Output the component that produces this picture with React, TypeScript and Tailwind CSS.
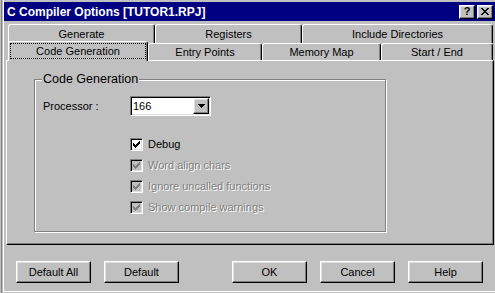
import React from "react";

const raised =
  "bg-[#c0c0c0] border border-t-white border-l-white border-r-black border-b-black shadow-[inset_-1px_-1px_#808080,inset_1px_1px_#dfdfdf]";
const sunken =
  "border border-t-[#808080] border-l-[#808080] border-r-white border-b-white shadow-[inset_1px_1px_#000,inset_-1px_-1px_#dfdfdf]";
const grayText = "text-[#808080] [text-shadow:1px_1px_0_#fff]";

const backRow = [
  { label: "Generate", w: "w-[147px]" },
  { label: "Registers", w: "w-[147px]" },
  { label: "Include Directories", w: "w-[191px]" },
];

const frontRow = [
  { label: "Entry Points", w: "w-[114px]" },
  { label: "Memory Map", w: "w-[119px]" },
  { label: "Start / End", w: "w-[112px]" },
];

const options = [
  { label: "Debug", enabled: true },
  { label: "Word align chars", enabled: false },
  { label: "Ignore uncalled functions", enabled: false },
  { label: "Show compile warnings", enabled: false },
];

const tabBase =
  "border-t border-l border-r border-t-white border-l-white border-r-black rounded-t-[3px] shadow-[inset_-1px_0_#808080] bg-[#c0c0c0] flex items-center justify-center text-[11px] text-black";

function Check({ color }: { color: string }) {
  const cols = [2, 3, 4, 3, 2, 1, 0];
  return (
    <svg width="7" height="7" viewBox="0 0 7 7" shapeRendering="crispEdges">
      {cols.map((y, x) => (
        <rect key={x} x={x} y={y} width="1" height="3" fill={color} />
      ))}
    </svg>
  );
}

function CloseGlyph() {
  const rows = [
    [0, 1, 6, 7],
    [1, 2, 5, 6],
    [2, 3, 4, 5],
    [3, 4],
    [2, 3, 4, 5],
    [1, 2, 5, 6],
    [0, 1, 6, 7],
  ];
  return (
    <svg width="8" height="7" viewBox="0 0 8 7" shapeRendering="crispEdges">
      {rows.map((r, y) =>
        r.map((x) => <rect key={`${x}-${y}`} x={x} y={y} width="1" height="1" fill="#000" />)
      )}
    </svg>
  );
}

function Button({ label, className = "" }: { label: string; className?: string }) {
  return (
    <div className={`${raised} w-[75px] h-[22px] flex items-center justify-center text-[11px] text-black ${className}`}>
      {label}
    </div>
  );
}

export default function App() {
  return (
    <div className="w-[495px] h-[293px] bg-[#c0c0c0] pl-[1px] overflow-hidden font-['Liberation_Sans',Arial,sans-serif] select-none">
      <div className="h-full border-l border-[#808080]">
        <div className="ml-[1px] h-[292px] border-l border-b border-white pt-[2px] flex flex-col">
          {/* title bar */}
          <div className="h-[19px] bg-[#000080] flex items-center justify-between pl-[3px] pr-[2px]">
            <span className="text-white font-bold text-[12px] leading-none">C Compiler Options [TUTOR1.RPJ]</span>
            <div className="flex gap-[2px]">
              <div className={`${raised} w-[16px] h-[14px] flex items-center justify-center text-[11px] font-bold leading-none text-black`}>
                ?
              </div>
              <div className={`${raised} w-[16px] h-[14px] flex items-center justify-center`}>
                <CloseGlyph />
              </div>
            </div>
          </div>

          {/* tabs */}
          <div className="mt-[3px] ml-[4px] flex h-[19px]">
            {backRow.map((t) => (
              <div key={t.label} className={`${tabBase} ${t.w} h-full`}>
                {t.label}
              </div>
            ))}
          </div>
          <div className="ml-[4px] flex items-end h-[17px]">
            <div className={`${tabBase} w-[140px] h-[20px] mb-[-1px] relative z-10 px-[1px] pt-[1px] pb-[2px]`}>
              <div className="w-full h-full border border-dotted border-black flex items-center justify-center">
                Code Generation
              </div>
            </div>
            {frontRow.map((t) => (
              <div key={t.label} className={`${tabBase} ${t.w} h-[17px]`}>
                {t.label}
              </div>
            ))}
          </div>

          {/* panel */}
          <div className="ml-[2px] w-[488px] h-[185px] border border-t-white border-l-white border-r-black border-b-black shadow-[inset_-1px_-1px_#808080] pl-[27px] pt-[18px]">
            <div className="relative w-[352px] h-[153px] border border-[#808080] shadow-[inset_1px_1px_#fff,1px_1px_#fff] pl-[8px] pt-[16px]">
              <span className="absolute left-[7px] top-[-8px] bg-[#c0c0c0] px-[1px] text-[12.5px] leading-[15px] text-black">
                Code Generation
              </span>
              <div className="flex items-center h-[20px]">
                <span className="w-[87px] text-[11px] text-black">Processor :</span>
                <div className={`${sunken} w-[81px] h-[20px] bg-white flex items-center justify-between pl-[2px] pr-[1px]`}>
                  <span className="text-[11px] text-black">166</span>
                  <div className={`${raised} w-[16px] h-[16px] flex items-center justify-center`}>
                    <svg width="7" height="4" viewBox="0 0 7 4" shapeRendering="crispEdges">
                      <path d="M0 0h7v1h-1v1h-1v1h-1v1h-1v-1h-1v-1h-1v-1h-1z" fill="#000" />
                    </svg>
                  </div>
                </div>
              </div>
              <div className="ml-[87px] mt-[22px] flex flex-col gap-[8px]">
                {options.map((o) => (
                  <div key={o.label} className="flex items-center gap-[5px] h-[13px]">
                    <div
                      className={`${sunken} w-[13px] h-[13px] flex items-center justify-center ${
                        o.enabled ? "bg-white" : "bg-[#c0c0c0]"
                      }`}
                    >
                      <Check color={o.enabled ? "#000" : "#808080"} />
                    </div>
                    <span className={`text-[11px] leading-none ${o.enabled ? "text-black" : grayText}`}>{o.label}</span>
                  </div>
                ))}
              </div>
            </div>
          </div>

          {/* buttons */}
          <div className="mt-[16px] ml-[12px] flex">
            <Button label="Default All" />
            <Button label="Default" className="ml-[13px]" />
            <Button label="OK" className="ml-[53px]" />
            <Button label="Cancel" className="ml-[13px]" />
            <Button label="Help" className="ml-[13px]" />
          </div>
        </div>
      </div>
    </div>
  );
}
